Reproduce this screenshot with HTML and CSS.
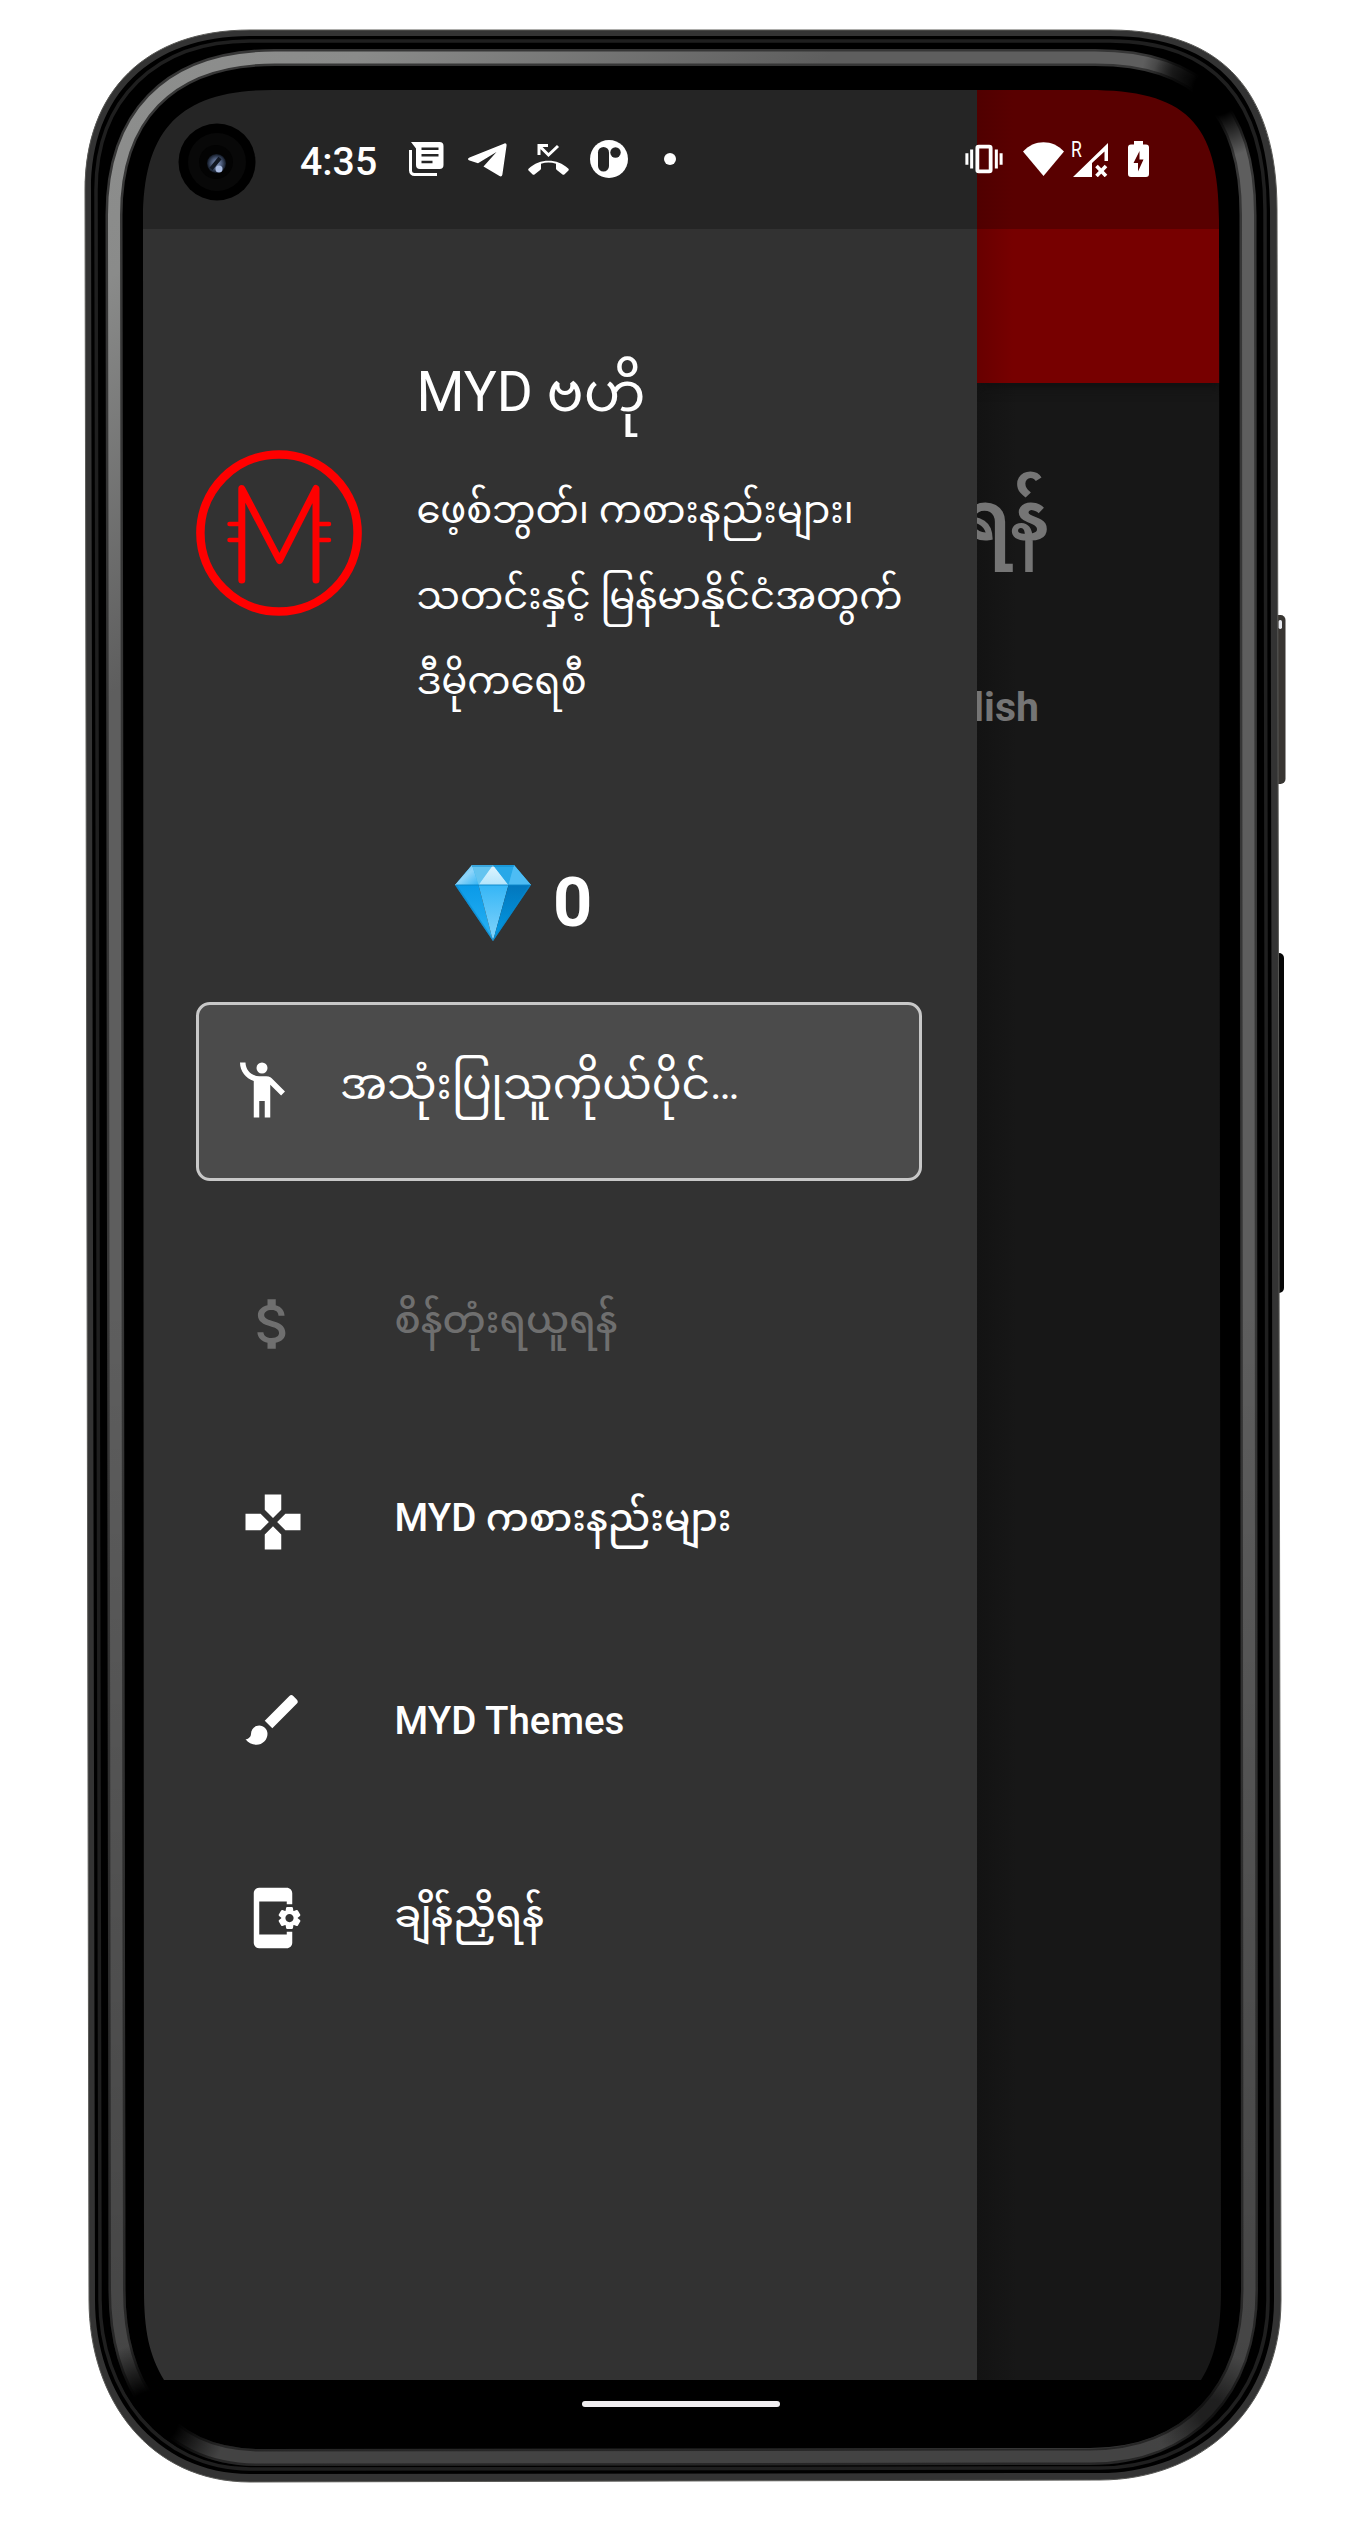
FILE: index.html
```html
<!DOCTYPE html>
<html lang="my">
<head>
<meta charset="utf-8">
<title>MYD ဗဟို</title>
<link rel="stylesheet" href="styles.css">
</head>
<body>
<div class="device">
  <svg class="frame" viewBox="0 0 1370 2534" aria-hidden="true">
    <defs>
      <linearGradient id="shine" x1="100" y1="60" x2="420" y2="420" gradientUnits="userSpaceOnUse">
        <stop offset="0" stop-color="#8e8f8e"/><stop offset=".35" stop-color="#8a8b8a"/><stop offset="1" stop-color="#5e5e5e"/>
      </linearGradient>
      <linearGradient id="fall" x1="0" y1="1300" x2="0" y2="2500" gradientUnits="userSpaceOnUse">
        <stop offset="0" stop-color="#000" stop-opacity="0"/><stop offset="1" stop-color="#000" stop-opacity=".3"/>
      </linearGradient>
      <radialGradient id="shade"><stop offset=".35" stop-color="#000"/><stop offset="1" stop-color="#000" stop-opacity="0"/></radialGradient>
      <radialGradient id="dim"><stop offset=".2" stop-color="#000" stop-opacity=".55"/><stop offset="1" stop-color="#000" stop-opacity="0"/></radialGradient>
      <clipPath id="glass"><path d="M98 190C98 102 156 43 250 43H1110C1213 43 1263 104 1263 210L1266 2300C1266 2398 1191 2466 1100 2466L250 2467C161 2467 102 2390 102 2300Z"/></clipPath>
    </defs>
    <rect x="1270" y="615" width="15.5" height="169" rx="5" fill="#383532"/>
    <rect x="1278.500" y="620" width="3.500" height="9" rx="1.700" fill="#e8eaf0"/>
    <rect x="1270" y="953" width="14" height="340" rx="5" fill="#060606"/>
    <path d="M85 190C85 91 146 30 250 30H1110C1225 30 1277 95 1277 210L1281 2300C1281 2410 1200 2480 1100 2480L250 2482C150 2482 89 2400 89 2300Z" fill="#333" stroke="#5a5a57" stroke-width="1"/>
    <path d="M91 190C91 95 150 36 250 36H1110C1220 36 1270 98 1270 210L1274 2300C1274 2405 1197 2473 1100 2473L250 2474C155 2474 95 2395 95 2300Z" fill="#000"/>
    <path d="M96 190C96 100 155 41 250 41H1110C1215 41 1265 102 1265 210L1268 2300C1268 2400 1193 2468 1100 2468L250 2469C160 2469 100 2392 100 2300Z" fill="#000" stroke="#1f1f1f" stroke-width="3.500"/>
    <g fill="none">
      <path d="M114 215C114 120 165 57.500 275 57.500H1095C1200 57.500 1248 110 1248 215L1249.500 2290C1249.500 2390 1190 2456 1090 2456.500L260 2457.500C160 2457.500 117 2380 117 2290Z" stroke="#363636" stroke-width="17"/>
      <path d="M114 215C114 120 165 57.500 275 57.500H1095C1200 57.500 1248 110 1248 215L1249.500 2290C1249.500 2390 1190 2456 1090 2456.500L260 2457.500C160 2457.500 117 2380 117 2290Z" stroke="url(#shine)" stroke-width="12"/>
      <path d="M114 1200L117 2290C117 2380 160 2457.500 260 2457.500H1090C1190 2456 1249.500 2390 1249.500 2290L1249 1200" stroke="url(#fall)" stroke-width="17"/>
    </g>
    <g clip-path="url(#glass)">
      <circle cx="1216" cy="92" r="66" fill="url(#shade)"/>
      <circle cx="1180" cy="72" r="38" fill="url(#dim)"/>
      <circle cx="152" cy="2418" r="76" fill="url(#shade)"/>
      <circle cx="1212" cy="2412" r="60" fill="url(#dim)"/>
    </g>
  </svg>

  <main class="screen">
    <header class="status">
      <svg class="camera" viewBox="0 0 78 78" aria-hidden="true">
        <defs><radialGradient id="lens"><stop offset="0" stop-color="#8da0c4"/><stop offset=".55" stop-color="#4b5a78"/><stop offset="1" stop-color="#111824"/></radialGradient></defs>
        <circle cx="39" cy="39" r="38.500" fill="#000"/><circle cx="39" cy="39" r="29" fill="#080808"/><circle cx="38" cy="39" r="17" fill="#030303"/>
        <circle cx="38.500" cy="40.500" r="9.500" fill="url(#lens)"/><path d="M33 46l9-11" stroke="#111722" stroke-width="4"/><circle cx="41" cy="46" r="3.500" fill="#a9bbe0"/>
      </svg>
      <time class="clock">4:35</time>
      <svg class="i-notes" viewBox="0 0 35 34"><path d="M2 0h28.500a4 4 0 0 1 4 4v19a4 4 0 0 1-4 4H11a4 4 0 0 1-4-4V6.500Z"/><path d="M12.500 6.800h17M12.500 13.300h17M12.500 20h11" stroke="#252525" stroke-width="2.500"/><path d="M1.500 8v20.500a4 4 0 0 0 4 4H28" fill="none" stroke="#fff" stroke-width="3"/></svg>
      <svg class="i-plane" viewBox="0 0 39 34"><path d="M36.500.4 1.500 14.500c-2 .9-2 2.300 0 3l8.500 2.800L28.500 9 15.500 23.500 31.500 33c1.500.9 2.500.2 2.900-1.500L38.500 3c.3-2-.5-3-2-2.600Z"/></svg>
      <svg class="i-missed" viewBox="0 0 41 31"><path d="M11 11V1.500h9M12 2.500l8.500 8.500L30 2" fill="none" stroke="#fff" stroke-width="3"/><path d="M.8 24.500C11.500 14 29.500 14 40.200 24.500c.8.800.8 1.500 0 2.300l-3.600 3.500c-.8.700-1.600.7-2.400 0l-5.400-4.200c-.6-.5-.8-1-.8-1.600v-4.800c-5-1.500-10-1.500-15 0v4.800c0 .6-.2 1.100-.8 1.600l-5.400 4.200c-.8.700-1.600.7-2.400 0L.8 26.800c-.8-.8-.8-1.500 0-2.300Z"/></svg>
      <svg class="i-disc" viewBox="0 0 38 38"><circle cx="19" cy="19" r="19"/><rect x="8" y="7" width="11" height="24.500" rx="5.500" fill="#252525"/><circle cx="25.500" cy="12.500" r="5.200" fill="#252525"/></svg>
      <span class="more-dot"></span>
      <svg class="i-vibrate" viewBox="0 0 40 30"><rect x="13" y="2" width="14" height="26" rx="1.500" fill="none" stroke="#fff" stroke-width="4"/><path d="M2 9v12M7 5v20M33 5v20M38 9v12" stroke="#fff" stroke-width="3.200"/></svg>
      <svg class="i-wifi" viewBox="0 0 41 34"><path d="M20.500 34 0 9.500C11-3 30-3 41 9.500Z"/></svg>
      <div class="cell">
        <span class="roam">R</span>
        <svg class="i-signal" viewBox="0 0 35 34"><path fill-rule="evenodd" d="M35 0v18h-3.500V8.500L19 20v14H0Z"/><path d="m23.500 23 9.500 10M33 23l-9.500 10" stroke="#fff" stroke-width="3.600"/></svg>
      </div>
      <svg class="i-battery" viewBox="0 0 21 36"><path fill-rule="evenodd" d="M6 0h9v3.500h3a3 3 0 0 1 3 3V33a3 3 0 0 1-3 3H3a3 3 0 0 1-3-3V6.500a3 3 0 0 1 3-3h3ZM11.500 10 5.500 22H10v8.500L15.500 18.500h-4Z"/></svg>
    </header>

    <div class="content">
      <aside class="drawer">
        <section class="about">
          <svg class="logo" viewBox="0 0 166 166">
            <circle cx="83" cy="83" r="78.600" stroke-width="8.500"/>
            <path d="M45.800 130V38.500L83.500 110.500 120 38.500V130" stroke-width="7" stroke-linecap="round" stroke-linejoin="round"/>
            <path d="M33.500 74H45M33.500 90H45M121 74h12M121 90h12" stroke-width="4.500" stroke-linecap="round"/>
          </svg>
          <div class="about-text">
            <h1>MYD ဗဟို</h1>
            <p>ဖေ့စ်ဘွတ်၊ ကစားနည်းများ၊<br>သတင်းနှင့် မြန်မာနိုင်ငံအတွက်<br>ဒီမိုကရေစီ</p>
          </div>
        </section>

        <div class="gems">
          <svg class="gem" viewBox="0 0 76 76">
            <defs>
              <linearGradient id="g1" x1="0" y1="0" x2="1" y2="1"><stop offset="0" stop-color="#4eb5ea"/><stop offset=".5" stop-color="#8fd5fa"/><stop offset="1" stop-color="#35b5f5"/></linearGradient>
              <linearGradient id="g2" x1="0" y1="0" x2="0" y2="1"><stop offset="0" stop-color="#35b6f6"/><stop offset="1" stop-color="#84d4fb"/></linearGradient>
              <linearGradient id="g3" x1="0" y1="0" x2="0" y2="1"><stop offset="0" stop-color="#0a9ae8"/><stop offset="1" stop-color="#2ab2f3"/></linearGradient>
              <linearGradient id="g4" x1="0" y1="0" x2="0" y2="1"><stop offset="0" stop-color="#0277bd"/><stop offset="1" stop-color="#039be5"/></linearGradient>
              <linearGradient id="g5" x1="0" y1="0" x2="0" y2="1"><stop offset="0" stop-color="#e1f5fe"/><stop offset="1" stop-color="#b3e5fc"/></linearGradient>
            </defs>
            <path d="M17 0H59L76 20H0Z" fill="#2cb3f3"/>
            <path d="M17 0 0 20H23.500Z" fill="url(#g1)"/><path d="M17 0H38L23.500 20Z" fill="#64c4f0"/>
            <path d="M38 0 23.500 20h30Z" fill="url(#g5)"/><path d="M38 0H59L53.500 20Z" fill="#27a8e8"/><path d="M59 0 76 20H53.500Z" fill="#4dbcf4"/>
            <path d="M0 20H23.500L38 76Z" fill="url(#g3)"/><path d="M23.500 20h30L38 76Z" fill="url(#g2)"/><path d="M53.500 20H76L38 76Z" fill="url(#g4)"/>
            <path d="M17 1H59M1 20H75M1 20 38 75 75 20" fill="none" stroke="#0a86c8" stroke-opacity=".6" stroke-width="1.500"/>
          </svg>
          <strong>0</strong>
        </div>

        <button class="user">
          <svg class="icon" viewBox="0 0 24 24"><circle cx="12" cy="4" r="2"/><path d="M15.890 8.110C15.500 7.720 14.830 7 13.530 7c-.21 0-1.420 0-2.540 0C8.240 6.990 6 4.750 6 2H4c0 3.160 2.110 5.840 5 6.710V22h2v-6h2v6h2V10.050L18.950 14l1.410-1.410Z"/></svg>
          <span>အသုံးပြုသူကိုယ်ပိုင်…</span>
        </button>

        <nav class="menu">
          <a class="item off"><svg class="icon" viewBox="0 0 24 24"><path d="M11.800 10.900c-2.270-.59-3-1.200-3-2.150 0-1.090 1.010-1.850 2.700-1.850 1.780 0 2.440.85 2.500 2.100h2.210c-.07-1.720-1.120-3.300-3.210-3.810V3h-3v2.160c-1.940.42-3.500 1.680-3.500 3.610 0 2.310 1.910 3.460 4.700 4.130 2.500.6 3 1.480 3 2.410 0 .69-.49 1.790-2.700 1.790-2.060 0-2.870-.92-2.980-2.100h-2.200c.12 2.190 1.760 3.420 3.680 3.830V21h3v-2.150c1.950-.37 3.500-1.500 3.500-3.550 0-2.840-2.430-3.810-4.700-4.400z"/></svg><span>စိန်တုံးရယူရန်</span></a>
          <a class="item"><svg class="icon" viewBox="0 0 24 24"><path d="M15 7.500V2H9v5.500l3 3 3-3zM7.500 9H2v6h5.500l3-3-3-3zM9 16.500V22h6v-5.500l-3-3-3 3zM16.500 9l-3 3 3 3H22V9h-5.500z"/></svg><span>MYD ကစားနည်းများ</span></a>
          <a class="item themes"><svg class="icon" viewBox="0 0 24 24"><path d="M7 14c-1.660 0-3 1.340-3 3 0 1.310-1.160 2-2 2 .92 1.220 2.490 2 4 2 2.210 0 4-1.790 4-4 0-1.660-1.340-3-3-3zm13.710-9.370l-1.340-1.340a1 1 0 0 0-1.410 0L9 12.250 11.750 15l8.960-8.960c.39-.39.39-1.020 0-1.410z"/></svg><span>MYD Themes</span></a>
          <a class="item"><svg class="icon" viewBox="0 0 24 24"><path d="M21.810 12.740l-.82-.63v-.22l.8-.63c.16-.12.2-.34.1-.51l-.85-1.480c-.07-.13-.21-.2-.35-.2-.05 0-.1.010-.15.030l-.95.38c-.08-.05-.11-.07-.19-.11l-.15-1.010C19.220 8.150 19.050 8 18.850 8h-1.710c-.2 0-.37.15-.4.34L16.600 9.350c-.03.020-.07.030-.1.050-.03.020-.06.040-.09.060l-.95-.38c-.05-.02-.1-.03-.15-.03-.14 0-.27.07-.35.2l-.85 1.480c-.1.17-.06.39.1.51l.8.63v.23l-.8.63c-.16.12-.2.34-.1.51l.85 1.480c.07.13.21.2.35.2.05 0 .1-.01.15-.03l.95-.37c.08.050.12.070.2.110l.15 1.010c.03.2.2.340.4.340h1.710c.2 0 .37-.15.4-.34l.15-1.010c.03-.02.07-.03.1-.05.03-.02.06-.04.09-.06l.95.38c.050.020.1.030.15.030.14 0 .27-.07.35-.2l.85-1.480c.1-.17.060-.39-.1-.51zM18 13.500c-.83 0-1.500-.67-1.500-1.500s.67-1.500 1.500-1.500 1.500.67 1.500 1.500-.67 1.500-1.500 1.500zM17 18H7V6h10v1h2V3c0-1.100-.9-2-2-2H7C5.900 1 5 1.900 5 3v18c0 1.100.9 2 2 2h10c1.100 0 2-.9 2-2v-4h-2z"/></svg><span>ချိန်ညှိရန်</span></a>
        </nav>
      </aside>

      <section class="page">
        <div class="appbar"></div>
        <h2>ရန်</h2>
        <p>lish</p>
      </section>
    </div>
  </main>
  <div class="home-pill"></div>
</div>
</body>
</html>
```
FILE: styles.css
```css
* { box-sizing: border-box; }

body {
  margin: 0;
  background: #fff;
  color: #fff;
  font-family: Roboto, "Noto Sans", "Noto Sans Myanmar", Padauk, sans-serif;
}

svg { display: block; flex: none; fill: #fff; }
h1, h2, p { margin: 0; font-weight: 400; white-space: nowrap; }

.device {
  position: relative;
  display: flex;
  flex-direction: column;
  align-items: center;
  width: 1370px;
  height: 2534px;
  padding: 90px 151px 0 143px;
  overflow: hidden;
}
.frame { position: absolute; left: 0; top: 0; width: 1370px; height: 2534px; }

.screen {
  position: relative;
  display: flex;
  align-self: flex-start;
  flex: none;
  flex-direction: column;
  width: 1078px;
  height: 2290px;
  clip-path: path("M0 130C0 38 38 0 130 0H945C1042 0 1076 32 1076 130L1078 2200C1078 2240 1072 2268 1058 2290H21C6 2265 1 2240 1 2200Z");
}

/* status bar */
.status {
  display: flex;
  align-items: flex-start;
  flex: none;
  height: 139px;
  background: linear-gradient(90deg, #252525 834px, #500000 834px, #590000 870px);
}
.camera { width: 78px; height: 78px; margin: 33px 0 0 35px; }
.clock {
  width: 77px;
  margin: 52px 0 0 44px;
  font-size: 39.200px;
  font-weight: 500;
  line-height: 40px;
}
.i-notes { width: 35px; height: 34px; margin: 52px 0 0 32px; }
.i-plane { width: 39px; height: 34px; margin: 53px 0 0 24px; }
.i-missed { width: 41px; height: 31px; margin: 54px 0 0 21px; }
.i-disc { width: 38px; height: 38px; margin: 50px 0 0 21px; }
.more-dot { width: 12px; height: 12px; margin: 63px 0 0 36px; border-radius: 50%; background: #fff; }
.i-vibrate { width: 38px; height: 30px; margin: 54px 0 0 289px; }
.i-wifi { width: 41px; height: 34px; margin: 52px 0 0 20px; }
.cell { display: grid; width: 37px; margin: 51px 0 0 7px; }
.cell > * { grid-area: 1 / 1; }
.roam { font-size: 22px; line-height: 17px; transform: scaleX(.8); transform-origin: 0 0; }
.i-signal { width: 35px; height: 34px; margin: 2px 0 0 2px; }
.i-battery { width: 21px; height: 36px; margin: 51px 0 0 20px; }

/* drawer */
.content { display: flex; flex: 1; }
.drawer {
  flex: none;
  width: 834px;
  padding: 115px 0 0 53px;
  background: #323232;
}
.about { display: flex; gap: 54.500px; height: 494px; }
.logo { width: 166px; height: 166px; margin-top: 106px; fill: none; stroke: #f00; }
h1 { font-size: 55px; line-height: 96px; }
.about-text p { margin-top: 27px; font-size: 38.500px; line-height: 85.600px; }

.gems {
  display: flex;
  align-items: center;
  gap: 22px;
  height: 130px;
  margin-left: 259px;
}
.gem { width: 76px; height: 76px; }
.gems strong { font-size: 68.500px; line-height: 76px; }

.user {
  display: flex;
  align-items: flex-start;
  gap: 45px;
  width: 726px;
  height: 179px;
  margin-top: 34px;
  padding: 52px 0 0 30px;
  border: 3px solid #c8c8c8;
  border-radius: 14px;
  background: #4b4b4b;
  color: #fff;
  font: 400 44px/54px Roboto, "Noto Sans", "Noto Sans Myanmar", Padauk, sans-serif;
}
.icon { width: 66px; height: 66px; }

.menu { padding: 77px 0 0 44px; }
.item {
  display: flex;
  align-items: center;
  gap: 88.500px;
  height: 132px;
  margin-bottom: 66px;
  font-size: 38.500px;
  font-weight: 500;
  line-height: 60px;
  white-space: nowrap;
}
.item span { padding-bottom: 8px; }
.themes span { padding: 2px 0 0; }
.off { color: #6f6f6f; }
.off svg { fill: #6f6f6f; }

/* dimmed page behind the drawer */
.page {
  flex: 1;
  overflow: hidden;
  background: linear-gradient(90deg, #131313, #171717 40px);
  color: #757575;
}
.appbar {
  height: 154px;
  background: linear-gradient(90deg, #680000, #770000 36px);
  box-shadow: 0 4px 10px #101010;
}
h2 {
  width: 72px;
  margin-top: 62px;
  font-size: 68.750px;
  font-weight: 700;
  line-height: 144px;
  direction: rtl;
}
.page p {
  width: 62px;
  margin-top: 88px;
  font-size: 41px;
  font-weight: 700;
  line-height: 60px;
  direction: rtl;
}

.home-pill {
  position: relative;
  flex: none;
  width: 198px;
  height: 6px;
  margin-top: 21px;
  border-radius: 3px;
  background: #f0eef0;
}
```
